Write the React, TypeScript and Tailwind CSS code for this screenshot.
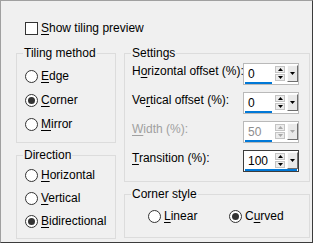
import React from 'react';

// Label with a Windows-style access key (underlined letter)
const Mn = ({ text, k }: { text: string; k: number }) => (
  <>
    {text.slice(0, k)}
    <u className="underline-offset-[2px]">{text[k]}</u>
    {text.slice(k + 1)}
  </>
);

const Radio = ({ label, k, checked = false }: { label: string; k: number; checked?: boolean }) => (
  <div className="flex items-center gap-[3px] h-[16px]">
    <div className="w-[13px] h-[13px] rounded-full border border-[#333333] bg-white flex items-center justify-center">
      {checked && <div className="w-[7px] h-[7px] rounded-full bg-[#333333]" />}
    </div>
    <span className="leading-[15px] whitespace-nowrap">
      <Mn text={label} k={k} />
    </span>
  </div>
);

const Group = ({
  title,
  className = '',
  children,
}: {
  title: string;
  className?: string;
  children: React.ReactNode;
}) => (
  <fieldset className={`border border-[#dcdcdc] ${className}`}>
    <legend className="ml-[6px] px-[1px] leading-[15px]">{title}</legend>
    {children}
  </fieldset>
);

const Arrow = ({ up, color }: { up?: boolean; color: string }) => (
  <svg width="5" height="3" viewBox="0 0 5 3">
    <polygon points={up ? '2.5,0 5,3 0,3' : '0,0 5,0 2.5,3'} fill={color} />
  </svg>
);

const SpinBox = ({
  value,
  focused = false,
  disabled = false,
}: {
  value: string;
  focused?: boolean;
  disabled?: boolean;
}) => {
  const arrow = disabled ? '#a8a8a8' : '#000000';
  return (
    <div
      className={`flex shrink-0 w-[56px] h-[22px] border bg-white ${
        focused ? 'border-[#3c3c3c]' : 'border-[#b9b9b9]'
      }`}
    >
      <div className="relative w-[29px] h-full flex items-center pl-[4px]">
        <span className={`leading-[15px] ${disabled ? 'text-[#8d8d8d]' : 'text-black'}`}>{value}</span>
        <div
          className={`absolute bottom-0 left-[1px] h-[2px] bg-[#0078d7] ${focused ? 'w-[52px]' : 'w-[27px]'}`}
        />
      </div>
      <div className="ml-[2px] mt-[2px] flex flex-col gap-[1px]">
        <div className="w-[10px] h-[7px] border border-[#c4c4c4] bg-[#ececec] flex items-center justify-center">
          <Arrow up color={arrow} />
        </div>
        <div className="w-[10px] h-[7px] border border-[#c4c4c4] bg-[#ececec] flex items-center justify-center">
          <Arrow color={arrow} />
        </div>
      </div>
      <div className="ml-[2px] mt-[1px] w-[11px] h-[17px] bg-[#e9e9e9] border-t border-l border-[#fbfbfb] border-r border-b border-r-[#6e6e6e] border-b-[#6e6e6e] flex items-center justify-center">
        <Arrow color={arrow} />
      </div>
    </div>
  );
};

const SettingRow = ({
  label,
  k,
  value,
  focused,
  disabled,
}: {
  label: string;
  k: number;
  value: string;
  focused?: boolean;
  disabled?: boolean;
}) => (
  <div className="flex items-start">
    <span
      className={`w-[111px] shrink-0 mt-[1px] leading-[15px] whitespace-nowrap ${
        disabled ? 'text-[#a0a0a0]' : ''
      }`}
    >
      <Mn text={label} k={k} />
    </span>
    <SpinBox value={value} focused={focused} disabled={disabled} />
  </div>
);

export default function App() {
  return (
    <div
      className="w-[313px] h-[243px] bg-[#f0f0f0] text-[12px] text-black border-l border-t border-[#a0a0a0] border-r border-b border-r-[#3c3c3c] border-b-[#3c3c3c] flex flex-col"
      style={{ fontFamily: '"Liberation Sans", Arial, sans-serif' }}
    >
      {/* Show tiling preview */}
      <div className="mt-[21px] ml-[24px] flex items-center gap-[3px] h-[13px]">
        <div className="w-[13px] h-[13px] border border-[#333333] bg-white" />
        <span className="leading-[15px]">
          <Mn text="Show tiling preview" k={0} />
        </span>
      </div>

      <div className="mt-[11px] ml-[15px] flex gap-[8px]">
        {/* Left column */}
        <div className="w-[100px] flex flex-col">
          <Group title="Tiling method" className="h-[97px]">
            <div className="mt-[7px] pl-[8px] flex flex-col gap-[8px]">
              <Radio label="Edge" k={0} />
              <Radio label="Corner" k={0} checked />
              <Radio label="Mirror" k={0} />
            </div>
          </Group>
          <Group title="Direction" className="mt-[5px] h-[91px]">
            <div className="mt-[4px] pl-[8px] flex flex-col gap-[7px]">
              <Radio label="Horizontal" k={0} />
              <Radio label="Vertical" k={0} />
              <Radio label="Bidirectional" k={0} checked />
            </div>
          </Group>
        </div>

        {/* Right column */}
        <div className="w-[186px] flex flex-col">
          <Group title="Settings" className="h-[136px]">
            <div className="mt-[2px] pl-[7px] flex flex-col gap-[7px]">
              <SettingRow label="Horizontal offset (%):" k={1} value="0" />
              <SettingRow label="Vertical offset (%):" k={2} value="0" />
              <SettingRow label="Width (%):" k={0} value="50" disabled />
              <SettingRow label="Transition (%):" k={0} value="100" focused />
            </div>
          </Group>
          <Group title="Corner style" className="mt-[5px] h-[51px]">
            <div className="mt-[6px] pl-[23px] flex">
              <div className="w-[81px]">
                <Radio label="Linear" k={0} />
              </div>
              <Radio label="Curved" k={1} checked />
            </div>
          </Group>
        </div>
      </div>
    </div>
  );
}
